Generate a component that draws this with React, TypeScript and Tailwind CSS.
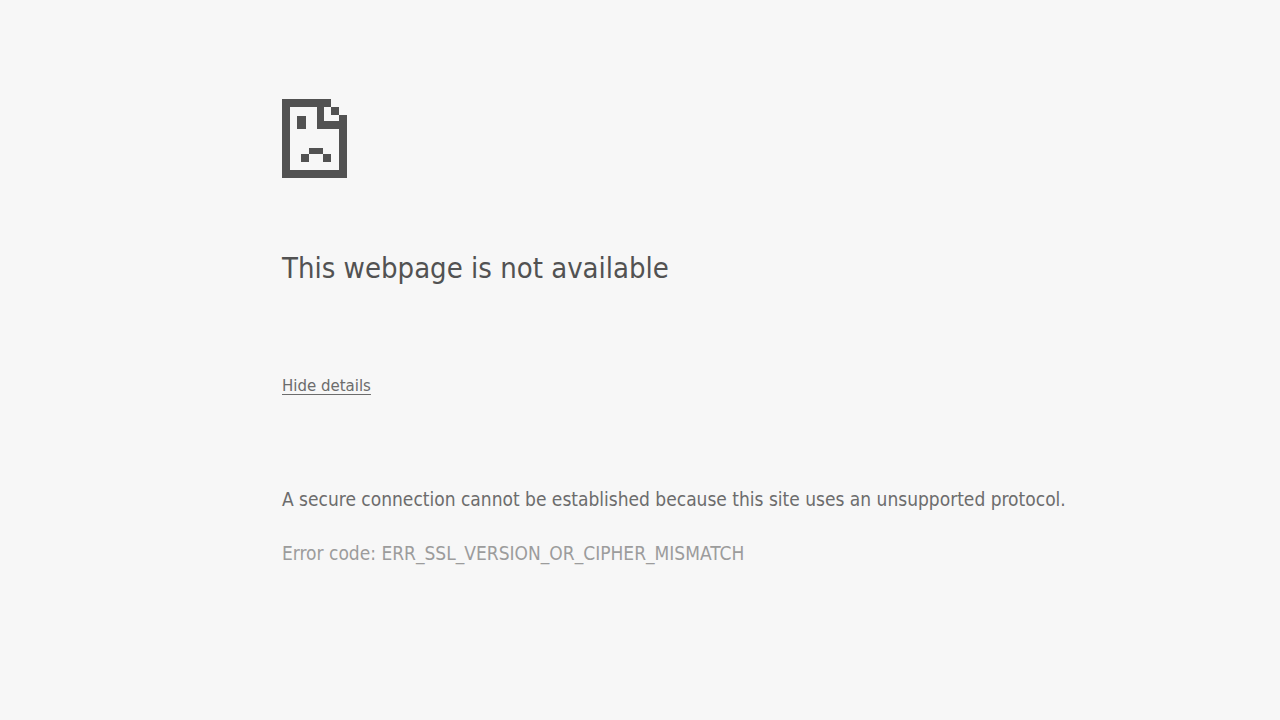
import { useState } from "react";

function SadPageIcon() {
  return (
    <svg
      className="block h-[79px] w-[65px] text-[#525252]"
      viewBox="0 0 195 237"
      fill="currentColor"
      shapeRendering="crispEdges"
      aria-hidden="true"
    >
      <path d="M0 0H147V24H126V66H171V48H195V237H0ZM24 24V213H171V90H105V24Z" fillRule="evenodd" />
      <path d="M147 24H171V48H147Z" />
      <path d="M45 51H72V90H45Z" />
      <path d="M81 147H123V165H147V189H123V165H81V189H57V165H81Z" />
    </svg>
  );
}

export default function App() {
  const [open, setOpen] = useState(true);

  return (
    <main className="min-h-screen bg-[#f7f7f7] px-6 pt-[99px] font-['DejaVu_Sans_Condensed','Noto_Sans',sans-serif] antialiased">
      <div className="mx-auto w-full max-w-[796px] pl-[40px]">
        <SadPageIcon />
        <h1 className="mt-[70px] text-[29px] leading-10 text-[#525252]">This webpage is not available</h1>
        <button
          type="button"
          aria-expanded={open}
          aria-controls="details"
          onClick={() => setOpen(!open)}
          className="mt-[88px] block font-['DejaVu_Sans',sans-serif] text-[15px] leading-5 text-[#6c6c6c] underline underline-offset-3"
        >
          {open ? "Hide details" : "Show details"}
        </button>
        {open && (
          <div id="details" className="mt-[89px] text-[19px] leading-7 sm:whitespace-nowrap">
            <p className="text-[#6c6c6c]">
              A secure connection cannot be established because this site uses an unsupported protocol.
            </p>
            <p className="mt-[26px] text-[#9c9c9c]">Error code: ERR_SSL_VERSION_OR_CIPHER_MISMATCH</p>
          </div>
        )}
      </div>
    </main>
  );
}
